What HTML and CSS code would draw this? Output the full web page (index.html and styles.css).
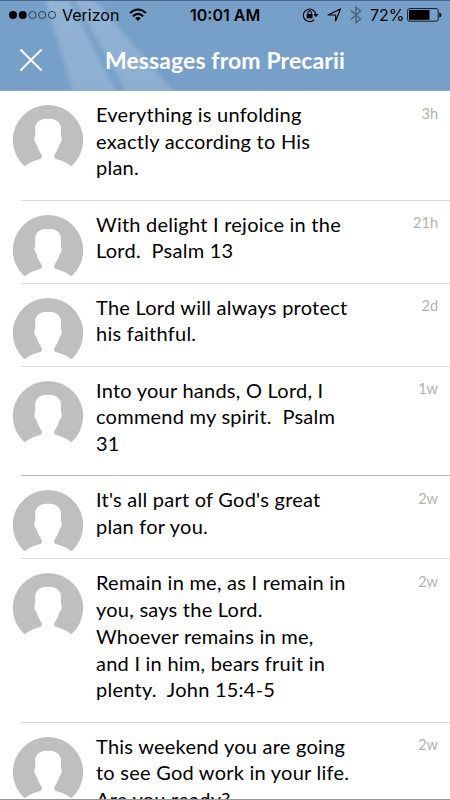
FILE: index.html
```html
<!DOCTYPE html>
<html lang="en">
<head>
    <meta charset="UTF-8">
    <meta name="viewport" content="width=device-width, initial-scale=1.0">
    <title>Messages from Precarii</title>
    <link rel="stylesheet" href="styles.css">
</head>
<body>
    <!-- shared avatar shape -->
    <svg class="defs" width="0" height="0">
        <symbol id="avatar" viewBox="0 0 72 72">
            <path fill="#bfbfbf" d="M12.500 62.300A35.200 35.200 0 1 1 59.500 62.300C54.500 58.500 49.500 56.500 44 55C42 54.300 41.800 52.500 42.700 50.500C44.500 47.500 46.500 44.500 47.600 40C49.500 38.500 50.500 33.500 48.900 32.500V25C48.900 18 44 14.800 36 14.800S23.200 18 23.200 25V32.500C21.500 33.500 22.500 38.500 24.500 40C25.600 44.500 27.500 47.500 29.500 50.500C30.400 52.500 30.200 54.300 28.200 55C22.500 56.500 17.500 58.500 12.500 62.300Z"/>
        </symbol>
    </svg>

    <header class="header">
        <svg class="beams" width="450" height="92" viewBox="0 0 450 92">
            <defs>
                <linearGradient id="fade" x1="0" y1="0" x2="0" y2="1">
                    <stop offset="0" stop-color="#fff" stop-opacity="0.2"/>
                    <stop offset="1" stop-color="#fff" stop-opacity="0.16"/>
                </linearGradient>
            </defs>
            <path class="beam" fill="url(#fade)" d="M44 -4H68L119 96H75Z"/>
            <path class="beam" fill="url(#fade)" d="M73 -4H92L178 96H129Z"/>
        </svg>
        <div class="status">
            <svg class="signal" width="50" height="14" viewBox="0 0 50 14">
                <circle cx="5" cy="7" r="4"/>
                <circle cx="14.700" cy="7" r="4"/>
                <g fill="none" stroke="#26333f" stroke-width="0.900">
                    <circle cx="24.500" cy="7" r="3.600"/>
                    <circle cx="34.200" cy="7" r="3.600"/>
                    <circle cx="44" cy="7" r="3.600"/>
                </g>
            </svg>
            <span class="carrier">Verizon</span>
            <svg class="wifi" width="18" height="14" viewBox="0 0 18 14" fill="none" stroke="#000" stroke-width="2.100">
                <path d="M1 5Q9-2 17 5M3.900 8.200Q9 3.500 14.100 8.200"/>
                <path fill="#000" stroke="none" d="M6.200 10Q9 7.800 11.800 10L9 13Z"/>
            </svg>
            <span class="clock">10:01 AM</span>
            <svg class="lock" width="17" height="16" viewBox="0 0 17 16">
                <path fill="none" stroke="#000" stroke-width="1.100" d="M12.200 12.600A6.300 6.300 0 1 1 13.800 7.500"/>
                <path d="M11.300 7H16.500L13.900 10.300Z"/>
                <rect x="4.700" y="7" width="5.800" height="4.300"/>
                <path fill="none" stroke="#000" stroke-width="1.100" d="M5.900 7V5.500A1.700 1.700 0 0 1 9.300 5.500V7"/>
            </svg>
            <svg class="location" width="15" height="14" viewBox="0 0 15 14">
                <path fill="none" stroke="#000" stroke-width="1.200" stroke-linejoin="round" d="M1 7L13.500 1L8.600 13V7Z"/>
            </svg>
            <svg class="bluetooth" width="12" height="20" viewBox="0 0 12 20">
                <path fill="none" stroke="#49647f" stroke-width="1.400" d="M1 5.500L10.500 14L6 18V2L10.500 6L1 14.500"/>
            </svg>
            <span class="percent">72%</span>
            <svg class="battery" width="36" height="14" viewBox="0 0 36 14">
                <rect x="0.600" y="0.600" width="30.600" height="12.600" rx="2" fill="none" stroke="#111b25"/>
                <rect x="2" y="2" width="20.500" height="9.800"/>
                <path d="M32.300 4.500Q34.500 5 34.500 7T32.300 9.500Z"/>
            </svg>
        </div>
        <div class="navbar">
            <svg class="close" width="24" height="24" viewBox="0 0 24 24">
                <path fill="none" stroke="#fff" stroke-width="2" stroke-linecap="round" d="M2 2L22 22M22 2L2 22"/>
            </svg>
            <h1>Messages from Precarii</h1>
        </div>
    </header>

    <main class="messages">
        <div class="message">
            <svg class="avatar"><use href="#avatar"/></svg>
            <p>Everything is unfolding<br>exactly according to His<br>plan.</p>
            <span class="time">3h</span>
        </div>
        <div class="message">
            <svg class="avatar"><use href="#avatar"/></svg>
            <p>With delight I rejoice in the<br>Lord.&nbsp; Psalm 13</p>
            <span class="time">21h</span>
        </div>
        <div class="message">
            <svg class="avatar"><use href="#avatar"/></svg>
            <p>The Lord will always protect<br>his faithful.</p>
            <span class="time">2d</span>
        </div>
        <div class="message dark-line">
            <svg class="avatar"><use href="#avatar"/></svg>
            <p>Into your hands, O Lord, I<br>commend my spirit.&nbsp; Psalm<br>31</p>
            <span class="time">1w</span>
        </div>
        <div class="message">
            <svg class="avatar"><use href="#avatar"/></svg>
            <p>It's all part of God's great<br>plan for you.</p>
            <span class="time">2w</span>
        </div>
        <div class="message">
            <svg class="avatar"><use href="#avatar"/></svg>
            <p>Remain in me, as I remain in<br>you, says the Lord.<br>Whoever remains in me,<br>and I in him, bears fruit in<br>plenty.&nbsp; John 15:4-5</p>
            <span class="time">2w</span>
        </div>
        <div class="message">
            <svg class="avatar"><use href="#avatar"/></svg>
            <p>This weekend you are going<br>to see God work in your life.<br>Are you ready?</p>
            <span class="time">2w</span>
        </div>
    </main>
</body>
</html>
```
FILE: styles.css
```css
* {
    box-sizing: border-box;
}
body {
    margin: 0;
    height: 800px;
    overflow: hidden;
    display: flex;
    flex-direction: column;
    background-color: #fff;
    border-bottom: 1px solid #999;
    font-family: Lato, "Liberation Sans", sans-serif;
    color: #000;
}
.defs {
    position: absolute;
}
.header {
    position: relative;
    flex: none;
    height: 91px;
    background-color: #77a0c9;
    border-top: 1px solid #47678d;
    border-bottom: 1px solid #a3adbc;
    overflow: hidden;
}
.beams {
    position: absolute;
    top: 0;
    left: 0;
}
.beam {
    filter: blur(2px);
}
.status {
    position: relative;
    display: flex;
    align-items: center;
    height: 28px;
    padding-left: 8px;
    font-family: Inter, "Liberation Sans", sans-serif;
    font-size: 16px;
    white-space: nowrap;
}
.status svg {
    flex: none;
}
.carrier {
    width: 58px;
    margin-left: 4px;
}
.wifi {
    margin-left: 9px;
}
.clock {
    width: 77px;
    margin-left: 43px;
    font-weight: 600;
}
.lock {
    margin-left: 35px;
}
.location {
    margin-left: 8px;
}
.bluetooth {
    margin-left: 8px;
}
.percent {
    width: 33px;
    margin-left: 8px;
}
.battery {
    margin-left: 4px;
}
.navbar {
    position: relative;
    display: flex;
    align-items: center;
    height: 61px;
    padding-left: 19px;
}
.navbar h1 {
    margin: 1px 0 0 62px;
    font-size: 23px;
    line-height: 30px;
    font-weight: 700;
    letter-spacing: 0.1px;
    color: #fff;
    white-space: nowrap;
}
.messages {
    flex: 1;
    min-height: 0;
    overflow: hidden;
}
.message {
    position: relative;
    display: flex;
    align-items: flex-start;
    padding: 10px 12px 18.6px;
    border-bottom: 1px solid transparent;
}
.message::after {
    content: "";
    position: absolute;
    left: 21px;
    right: 0;
    bottom: -1px;
    height: 1px;
    background-color: #dadada;
}
.message.dark-line::after {
    background-color: #b5b5b5;
}
.avatar {
    flex: none;
    width: 72px;
    height: 72px;
    margin: 3px 0 -30px;
}
.message p {
    flex: 1;
    margin: 0 0 0 12px;
    font-size: 20px;
    line-height: 26.7px;
    letter-spacing: 0.24px;
    white-space: nowrap;
}
.time {
    margin-top: 1.5px;
    font-size: 14.5px;
    line-height: 22px;
    color: #b2b2b2;
}
```
